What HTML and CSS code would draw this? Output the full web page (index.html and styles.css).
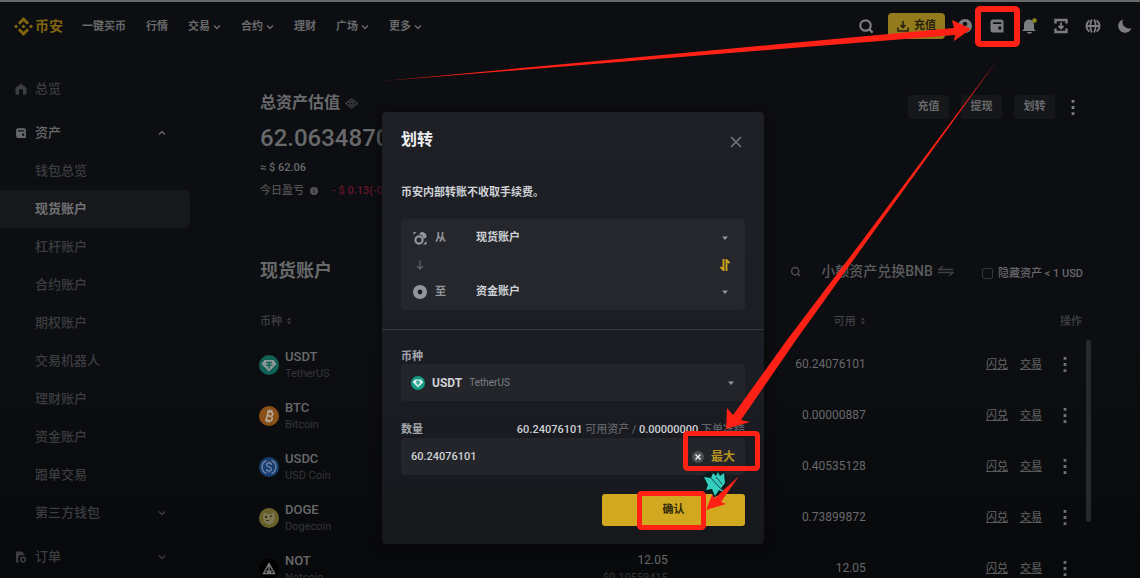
FILE: index.html
```html
<!DOCTYPE html>
<html lang="zh-CN">
<head>
<meta charset="utf-8">
<meta name="viewport" content="width=device-width, initial-scale=1">
<title>币安 - 现货账户</title>
<link rel="stylesheet" href="styles.css">
</head>
<body>
<svg class="defs" aria-hidden="true">
  <symbol id="chev" viewBox="0 0 8 8"><path d="M1 2.5 4 5.5 7 2.5" fill="none" stroke="currentColor" stroke-width="1.4"/></symbol>
  <symbol id="caret" viewBox="0 0 8 8"><path d="M1 2.5h6L4 6z" fill="currentColor"/></symbol>
  <symbol id="search" viewBox="0 0 16 16"><circle cx="7.5" cy="7.5" r="5.2" fill="none" stroke="currentColor" stroke-width="2.2"/><path d="m11 11 3.6 3.6" stroke="currentColor" stroke-width="2.4"/></symbol>
  <symbol id="wallet" viewBox="0 0 16 16"><path fill="currentColor" fill-rule="evenodd" d="M4 1.500h8A2.500 2.500 0 0 1 14.500 4v10.500H4A2.500 2.500 0 0 1 1.500 12V4A2.500 2.500 0 0 1 4 1.500zM4 4.300v1.700h8.300V4.300zM9.300 8.500v3h3v-3z"/></symbol>
  <symbol id="dots" viewBox="0 0 4 16"><path d="M.5 0h3v3h-3zM.5 6.500h3v3h-3zM.5 13h3v3h-3z" fill="currentColor"/></symbol>
  <symbol id="sort" viewBox="0 0 6 8"><path d="M1 3.300h4L3 .8zM1 4.700h4L3 7.200z" fill="currentColor"/></symbol>
  <symbol id="tether" viewBox="0 0 20 20"><circle cx="10" cy="10" r="10" fill="#159a83"/><path d="M5.500 5h9l3 4-7.500 7.500L2.500 9z" fill="#e4f5f1"/><path d="M7 6.800h6v1.400h-2.200v1c2 .1 3 .5 3 .9s-1 .8-3 .9v2.500H9.200V11c-2-.1-3-.5-3-.9s1-.8 3-.9v-1H7z" fill="#159a83"/></symbol>
</svg>

<header class="topbar">
  <a class="logo" href="#">
    <svg class="logo-mark" viewBox="0 0 20 20" fill="currentColor"><path d="m10 0 6 6-2.200 2.200L10 4.400 6.200 8.200 4 6zM10 20l6-6-2.200-2.200L10 15.600l-3.800-3.800L4 14zM2.200 7.800 4.400 10l-2.200 2.200L0 10zM17.800 7.800 20 10l-2.200 2.200-2.200-2.200zM10 7.800l2.200 2.200-2.200 2.200L7.800 10z"/></svg>
    <span>币安</span>
  </a>
  <nav class="nav">
    <a href="#">一键买币</a>
    <a href="#">行情</a>
    <a href="#">交易<svg class="i8"><use href="#chev"/></svg></a>
    <a href="#">合约<svg class="i8"><use href="#chev"/></svg></a>
    <a href="#">理财</a>
    <a href="#">广场<svg class="i8"><use href="#chev"/></svg></a>
    <a href="#">更多<svg class="i8"><use href="#chev"/></svg></a>
  </nav>
  <div class="tools">
    <button class="tool" aria-label="搜索"><svg class="i16"><use href="#search"/></svg></button>
    <button class="deposit"><svg class="i12" viewBox="0 0 12 12" fill="none" stroke="currentColor" stroke-width="1.600"><path d="M6 1v6M3.500 5 6 7.500 8.500 5M1 7.500V11h10V7.500"/></svg>充值</button>
    <button class="tool" aria-label="用户"><svg class="i16" viewBox="0 0 16 16"><circle cx="8" cy="8" r="7" fill="currentColor"/><circle cx="8" cy="6" r="2.300" fill="#0d0e11"/><path d="M3.800 12.200a4.500 4.500 0 0 1 8.400 0A6 6 0 0 1 8 13.800a6 6 0 0 1-4.200-1.600z" fill="#0d0e11"/></svg></button>
    <button class="tool" aria-label="钱包"><svg class="i16"><use href="#wallet"/></svg></button>
    <button class="tool" aria-label="通知"><svg class="i16" viewBox="0 0 16 16"><path d="M3 11V6.500a5 5 0 0 1 10 0V11l2 2H1zM6 14h5a2.500 1.800 0 0 1-5 0z" fill="currentColor"/><circle cx="13.500" cy="2.500" r="2.300" fill="#8a8a20"/></svg></button>
    <button class="tool" aria-label="下载"><svg class="i16" viewBox="0 0 16 16" fill="none" stroke="currentColor" stroke-width="2.400"><path d="M2.500 5.500V2h11v3.500M2.500 10.500V14h11v-3.500"/><path d="M8 4.500v6M5.500 8 8 10.500 10.500 8" stroke-width="1.800"/></svg></button>
    <button class="tool" aria-label="语言"><svg class="i16" viewBox="0 0 16 16" fill="none" stroke="currentColor" stroke-width="1.800"><path d="M4.500 2.500a6.500 6.500 0 0 0 0 11M11.500 2.500a6.500 6.500 0 0 1 0 11M1 8h14M6.800 1.500q-3 6.500 0 13M9.200 1.500q3 6.500 0 13"/></svg></button>
    <button class="tool" aria-label="深色模式"><svg class="i16" viewBox="0 0 16 16"><path d="M6 1.500A6.800 6.800 0 1 0 14.500 10 6.500 6.500 0 0 1 6 1.500z" fill="currentColor"/></svg></button>
  </div>
</header>

<div class="page">
  <aside class="side">
    <a class="group" href="#"><svg class="i12" viewBox="0 0 12 12"><path d="M6 .5 11.500 5v6.500H8V8a2 2 0 0 0-4 0v3.500H.5V5z" fill="currentColor"/></svg><span>总览</span></a>
    <a class="group open" href="#"><svg class="i12"><use href="#wallet"/></svg><span>资产</span><svg class="i8 flip"><use href="#chev"/></svg></a>
    <div class="sub">
      <a href="#">钱包总览</a>
      <a class="current" href="#">现货账户</a>
      <a href="#">杠杆账户</a>
      <a href="#">合约账户</a>
      <a href="#">期权账户</a>
      <a href="#">交易机器人</a>
      <a href="#">理财账户</a>
      <a href="#">资金账户</a>
      <a href="#">跟单交易</a>
      <a href="#"><span>第三方钱包</span><svg class="i8"><use href="#chev"/></svg></a>
    </div>
    <a class="group" href="#"><svg class="i12" viewBox="0 0 12 12"><path d="M1 .5h6l2.500 3v1.300A4 4 0 0 0 4.500 11.500H1z" fill="currentColor"/><circle cx="8" cy="8.500" r="2.300" fill="none" stroke="currentColor" stroke-width="1.600"/></svg><span>订单</span><svg class="i8"><use href="#chev"/></svg></a>
  </aside>

  <main class="main">
    <section class="summary">
      <div>
        <h1>总资产估值<svg class="eye" viewBox="0 0 12 12" fill="none" stroke="currentColor"><path d="M.7 6 6 1.800 11.300 6 6 10.200z"/><circle cx="6" cy="6" r="1.700"/></svg></h1>
        <p class="amount">62.0634870</p>
        <p class="approx">≈ $ 62.06</p>
        <p class="pnl">今日盈亏<svg class="i8" viewBox="0 0 8 8"><circle cx="4" cy="4" r="4" fill="currentColor"/><path d="M4 3.500V6M4 1.800v1" stroke="#0d0e11"/></svg><span class="loss">- $ 0.13(-0...</span></p>
      </div>
      <div class="actions">
        <button>充值</button><button>提现</button><button>划转</button>
        <button class="more" aria-label="更多"><svg class="dots"><use href="#dots"/></svg></button>
      </div>
    </section>

    <section class="toolbar">
      <h2>现货账户</h2>
      <div class="filters">
        <button class="find" aria-label="搜索币种"><svg class="i12"><use href="#search"/></svg></button>
        <a class="convert" href="#">小额资产兑换BNB<svg class="swap" viewBox="0 0 16 12" fill="none" stroke="currentColor" stroke-width="1.300"><path d="M0 4.500h15M5 1 1 4.500M0 7.500h16M15 7.500 11 11"/></svg></a>
        <label class="hide"><input type="checkbox">隐藏资产 &lt; 1 USD</label>
      </div>
    </section>

    <div class="list">
      <table class="coins">
        <colgroup><col class="c-name"><col class="c-total"><col class="c-free"><col class="c-act"></colgroup>
        <thead><tr><th>币种<svg class="sort"><use href="#sort"/></svg></th><td></td><th class="num">可用<svg class="sort"><use href="#sort"/></svg></th><th class="num">操作</th></tr></thead>
        <tbody>
          <tr>
            <td><div class="coin"><svg class="i20 dim"><use href="#tether"/></svg><div><b>USDT</b><small>TetherUS</small></div></div></td>
            <td></td><td class="num">60.24076101</td>
            <td><div class="ops"><a href="#">闪兑</a><a href="#">交易</a><button aria-label="更多"><svg class="dots"><use href="#dots"/></svg></button></div></td>
          </tr>
          <tr>
            <td><div class="coin"><svg class="i20" viewBox="0 0 20 20"><circle cx="10" cy="10" r="10" fill="#8a5018"/><g transform="rotate(14 10 10)" fill="none" stroke="#b3a698" stroke-width="1.600"><path d="M7 5.500h4a2.200 2.200 0 0 1 0 4.400H8.300M8.300 9.900h3.200a2.300 2.300 0 0 1 0 4.600H7M8.300 5.500v9M9 3.500v2M11.200 3.500v2M9 14.500v2M11.200 14.500v2"/></g></svg><div><b>BTC</b><small>Bitcoin</small></div></div></td>
            <td></td><td class="num">0.00000887</td>
            <td><div class="ops"><a href="#">闪兑</a><a href="#">交易</a><button aria-label="更多"><svg class="dots"><use href="#dots"/></svg></button></div></td>
          </tr>
          <tr>
            <td><div class="coin"><svg class="i20" viewBox="0 0 20 20"><circle cx="10" cy="10" r="10" fill="#173e70"/><path d="M7.500 3.500a7 7 0 0 0 0 13M12.500 3.500a7 7 0 0 1 0 13M12.500 8c0-2.600-5-2.600-5 0s5 1.400 5 4-5 2.600-5 0M10 4.500v1.600M10 13.800v1.700" fill="none" stroke="#7080a0" stroke-width="1.400"/></svg><div><b>USDC</b><small>USD Coin</small></div></div></td>
            <td></td><td class="num">0.40535128</td>
            <td><div class="ops"><a href="#">闪兑</a><a href="#">交易</a><button aria-label="更多"><svg class="dots"><use href="#dots"/></svg></button></div></td>
          </tr>
          <tr>
            <td><div class="coin"><svg class="i20" viewBox="0 0 20 20"><circle cx="10" cy="10" r="10" fill="#6a6129"/><path d="m5 4 3 2h4l3-2 1 6-2 5-4 2-5-3-1-5z" fill="#7d7653"/><path d="M6 8h2v2H6zM11 7.500h2v1.500h-2zM7 12h3v1H7z" fill="#38331d"/></svg><div><b>DOGE</b><small>Dogecoin</small></div></div></td>
            <td></td><td class="num">0.73899872</td>
            <td><div class="ops"><a href="#">闪兑</a><a href="#">交易</a><button aria-label="更多"><svg class="dots"><use href="#dots"/></svg></button></div></td>
          </tr>
          <tr>
            <td><div class="coin"><svg class="i20" viewBox="0 0 20 20"><circle cx="10" cy="10" r="10" fill="#010101"/><path d="M10 4.500 4.500 14.500h11zM10 4.500v10M7.500 11.500l2.500 3 2.500-3" fill="none" stroke="#777" stroke-width="1.400"/></svg><div><b>NOT</b><small>Notcoin</small></div></div></td>
            <td class="num">12.05<small>$0.10559415</small></td><td class="num">12.05</td>
            <td><div class="ops"><a href="#">闪兑</a><a href="#">交易</a><button aria-label="更多"><svg class="dots"><use href="#dots"/></svg></button></div></td>
          </tr>
        </tbody>
      </table>
      <div class="thumb"></div>
    </div>
  </main>
</div>

<div class="overlay">
  <form class="modal" role="dialog" aria-labelledby="dlg-title">
    <div class="modal-head">
      <h2 id="dlg-title">划转</h2>
      <button type="button" class="close" aria-label="关闭"><svg class="i12" viewBox="0 0 12 12"><path d="m1 1 10 10M11 1 1 11" stroke="currentColor" stroke-width="1.700"/></svg></button>
    </div>
    <p class="note">币安内部转账不收取手续费。</p>
    <div class="route">
      <div class="rows">
        <div class="row">
          <svg class="i16" viewBox="0 0 16 16"><circle cx="7" cy="10" r="3.600" fill="none" stroke="currentColor" stroke-width="2.200"/><path d="M7.500 3.500A4 4 0 0 1 14 8l-2.500.5A5 5 0 0 0 7.500 4.500zM1.500 2h3L1.500 5zM14.500 11v3.500H11z" fill="currentColor"/></svg>
          <label for="from">从</label>
          <select id="from"><option>现货账户</option></select>
          <svg class="i8"><use href="#caret"/></svg>
        </div>
        <div class="between"><svg class="down" viewBox="0 0 16 12"><path d="M8 1.500v8M5 7l3 3 3-3" fill="none" stroke="currentColor" stroke-width="1.400"/></svg></div>
        <div class="row">
          <svg class="i16" viewBox="0 0 16 16"><circle cx="8" cy="8" r="4.700" fill="none" stroke="currentColor" stroke-width="4.600"/><path d="m8 6 2 2-2 2-2-2z" fill="#14161a"/></svg>
          <label for="to">至</label>
          <select id="to"><option>资金账户</option></select>
          <svg class="i8"><use href="#caret"/></svg>
        </div>
      </div>
      <button type="button" class="flipper" aria-label="互换"><svg class="i12" viewBox="0 0 12 12" fill="none" stroke="currentColor" stroke-width="1.900"><path d="M4.500 0v11L1.500 8M7.500 12V1l3 3"/></svg></button>
    </div>
    <hr>
    <span class="label" id="coin-label">币种</span>
    <button type="button" class="field picker" aria-haspopup="listbox" aria-labelledby="coin-label">
      <svg class="i14"><use href="#tether"/></svg><b>USDT</b><small>TetherUS</small><svg class="i8"><use href="#caret"/></svg>
    </button>
    <div class="label qty"><label for="qty">数量</label><span class="avail"><b>60.24076101</b> 可用资产 / <b>0.00000000</b> 下单冻结</span></div>
    <div class="field">
      <input id="qty" type="text" value="60.24076101">
      <button type="button" class="clear" aria-label="清除"><svg class="i12" viewBox="0 0 12 12"><circle cx="6" cy="6" r="6" fill="#4a4d52"/><path d="m3.500 3.500 5 5M8.500 3.500l-5 5" stroke="#eee" stroke-width="1.500"/></svg></button>
      <button type="button" class="max">最大</button>
    </div>
    <button type="button" class="confirm">确认</button>
  </form>
</div>

<svg class="marks" width="1140" height="578" viewBox="0 0 1140 578" aria-hidden="true">
  <path d="M702 476l7-4 3 1 3-2 4 1 4-1 3 4v10l-5 6 1 6-5-1-4 2-1-6-8 1 2-6z" fill="#071c1f"/>
  <path d="M704 477l7 1 2-5 3 3 2-4 2 4 4-3 1 10-4 5 3 4-5-2-4 6-3-7-6 1 2-5z" fill="#35cbbd"/>
  <path d="M711 478l11 12M716 477l6 7" stroke="#0c4b4c"/>
  <g fill="#ff2116">
    <path d="M383 81 780 44 954 28 952 20 971 29 954 41 955 35 780 49z"/>
    <path d="M998 59 862 241 787 340 733 415 727 408 726 429 750 422 741 420 796 340 867 241z"/>
    <path d="M739 476 715 498 712 495 706 510 726 504 721 502z"/>
  </g>
  <g fill="none" stroke="#ff2116">
    <rect x="978" y="9" width="39" height="35" rx="2" stroke-width="6"/>
    <rect x="685.500" y="433.500" width="72" height="35" rx="2" stroke-width="5"/>
    <rect x="639.500" y="493.500" width="64" height="34" rx="2" stroke-width="5"/>
  </g>
</svg>
</body>
</html>
```
FILE: styles.css
```css
* { box-sizing: border-box; }
body {
  margin: 0;
  position: relative;
  height: 100vh;
  overflow: hidden;
  border-top: 2px solid #67696a;
  background: linear-gradient(#0d0e11 60%, #08090b);
  color: #68696b;
  font: 11px/16px Roboto, "Noto Sans CJK SC", sans-serif;
}
h1, h2, p { margin: 0; }
a { color: inherit; text-decoration: none; }
button, input, select {
  margin: 0; padding: 0; border: 0; background: none;
  color: inherit; font: inherit;
}
svg { display: block; flex: none; }
.defs { position: absolute; width: 0; height: 0; }
.i8 { width: 8px; height: 8px; }
.i12 { width: 12px; height: 12px; }
.i14 { width: 14px; height: 14px; }
.i16 { width: 16px; height: 16px; }
.i20 { width: 20px; height: 20px; }
.dots { width: 4px; height: 15px; }
.dim { opacity: .6; }

/* top bar */
.topbar { display: flex; align-items: center; height: 50px; padding: 0 7px 2px 14px; }
.logo { display: flex; align-items: center; gap: 2px; color: #80640f; font-size: 14px; font-weight: 700; }
.logo-mark { width: 19px; height: 19px; }
.nav { display: flex; gap: 20px; margin-left: 19px; padding-top: 2px; font-weight: 700; }
.nav a { display: flex; align-items: center; gap: 3px; }
.tools { display: flex; align-items: center; gap: 16px; margin-left: auto; color: #7c7d7e; }
.deposit {
  display: flex; align-items: center; justify-content: center; gap: 5px;
  width: 57px; height: 26px; margin: 0 -4px 0 -2px;
  border-radius: 4px; background: #937a1c; color: #28230f; font-weight: 700;
}

/* page */
.page { display: flex; align-items: flex-start; }
.side { width: 190px; flex: none; padding-top: 18px; color: #3b3d40; font-size: 13px; font-weight: 500; }
.side a { display: flex; align-items: center; height: 38px; padding: 0 24px 0 15px; }
.group { gap: 8px; }
.group.open { margin-top: 6px; color: #68696b; }
.sub + .group { margin-top: 6px; }
.side a > .i8:last-child { margin-left: auto; }
.flip { transform: rotate(180deg); }
.side .sub a { padding-left: 35px; }
.side .sub .current { border-radius: 0 6px 6px 0; background: #17181b; color: #707173; font-weight: 700; }

.main { flex: 1; min-width: 0; padding: 40px 49px 0 70px; }
.summary { display: flex; justify-content: space-between; align-items: flex-start; padding-right: 12px; }
h1 { display: flex; align-items: center; gap: 5px; font-size: 16px; line-height: 22px; font-weight: 700; }
.eye { width: 13px; height: 13px; color: #4a4c4e; }
.amount { margin-top: 6px; font-size: 24px; line-height: 36px; font-weight: 500; }
.approx { margin-top: 2px; line-height: 20px; font-weight: 500; }
.pnl { display: flex; align-items: center; gap: 6px; margin-top: 3px; line-height: 20px; font-weight: 500; color: #525355; }
.loss { margin-left: 8px; color: #65182a; }
.actions { display: flex; gap: 12px; margin-top: 3px; }
.actions button { width: 41px; height: 24px; border-radius: 4px; background: #15171a; font-weight: 700; }
.actions .more { display: flex; align-items: center; justify-content: center; width: 12px; background: none; color: #7c7d7e; }

.toolbar { display: flex; justify-content: space-between; align-items: center; height: 28px; margin-top: 56px; padding-right: 8px; }
.toolbar h2 { font-size: 18px; font-weight: 700; }
.filters { display: flex; align-items: center; }
.find { margin-right: 20px; color: #4b4c4e; }
.find .i12 { width: 11px; height: 11px; }
.convert { display: flex; align-items: center; gap: 5px; margin-right: 28px; color: #5a5b5d; font-size: 14px; font-weight: 500; }
.swap { width: 16px; height: 12px; color: #3f4042; }
.hide { display: flex; align-items: center; gap: 5px; padding-top: 5px; font-weight: 500; }
.hide input { appearance: none; width: 11px; height: 11px; border: 1px solid #333537; border-radius: 2px; }

.list { display: flex; align-items: flex-start; gap: 4px; margin-top: 20px; }
.coins { flex: 1; min-width: 0; table-layout: fixed; border-collapse: collapse; }
.c-name { width: 22%; }
.c-total { width: 27.6%; }
.c-free { width: 24.1%; }
.c-act { width: 26.3%; }
.coins th, .coins td { padding: 0; text-align: left; }
.coins thead tr { height: 34px; }
.coins th { color: #3f4143; font-weight: 500; }
.coins tbody tr { height: 51px; }
.coins .num { text-align: right; }
.coins td.num { font-size: 12px; line-height: 17px; }
.sort { display: inline-block; width: 6px; height: 8px; margin-left: 4px; }
.coin { display: flex; align-items: center; gap: 6px; margin-left: -1px; }
.coin b, .coins small { display: block; line-height: 17px; }
.coin b { font-size: 13px; font-weight: 500; }
.coins small { color: #343638; font-size: 11px; }
.ops { display: flex; justify-content: flex-end; align-items: center; gap: 12px; padding-right: 15px; }
.ops a { color: #58595b; font-weight: 500; text-decoration: underline; }
.ops button { margin-left: 9px; color: #707173; }
.thumb { width: 5px; height: 182px; margin-top: 35px; border-radius: 2px; background: #27292b; }

/* transfer dialog */
.overlay { position: absolute; inset: 0; display: flex; justify-content: center; align-items: flex-start; padding: 110px 0 0 6px; }
.modal {
  display: flex; flex-direction: column; width: 382px; padding: 16px 19px 18px;
  border-radius: 4px; background: linear-gradient(#1e2026, #1b1d24 60%, #16181c);
  color: #cfd2d6; box-shadow: 0 0 12px #07080a;
}
.modal-head { display: flex; justify-content: space-between; align-items: center; height: 24px; padding-right: 3px; }
.modal h2 { font-size: 16px; font-weight: 700; color: #eceef0; }
.close { padding-top: 4px; color: #71757b; }
.note { margin-top: 31px; line-height: 20px; font-weight: 700; }
.route { display: flex; align-items: center; height: 91px; margin-top: 16px; padding: 0 14px 0 11px; border-radius: 4px; background: #25272d; }
.rows { flex: 1; color: #92969c; }
.row { display: flex; align-items: center; gap: 7px; height: 26px; }
.row label { width: 34px; font-weight: 700; }
.row select { flex: 1; appearance: none; color: #cfd2d6; font-weight: 700; }
.between { display: flex; align-items: center; height: 28px; color: #5b5f65; }
.down { width: 16px; height: 12px; }
.flipper { margin-left: -10px; color: #cfa51c; }
.modal hr { width: calc(100% + 38px); height: 1px; margin: 19px -19px 20px; border: 0; background: #34373c; }
.label { line-height: 14px; font-weight: 700; color: #a4a7ac; }
.qty { display: flex; justify-content: space-between; margin-top: 21px; line-height: 16px; }
.avail { color: #5f6267; font-weight: 500; white-space: nowrap; }
.avail b { color: #cfd2d6; font-weight: 500; }
.field { display: flex; align-items: center; height: 37px; padding: 0 10px; border-radius: 4px; background: #23252a; }
.picker { gap: 7px; }
.picker b { font-size: 12px; font-weight: 700; }
.picker small { font-size: 10px; color: #7c8086; }
.picker > :last-child { margin-left: auto; color: #92969c; }
.field input { flex: 1; min-width: 0; font-weight: 500; }
.max { margin-left: 7px; font-size: 12px; font-weight: 700; color: #b8941f; }
.confirm { align-self: flex-end; width: 143px; height: 32px; margin-top: 19px; border-radius: 3px; background: #d0a920; color: #332a0c; font-weight: 700; }

/* tutorial arrows and frames above the window */
.marks { position: absolute; top: -2px; left: 0; pointer-events: none; }
```
